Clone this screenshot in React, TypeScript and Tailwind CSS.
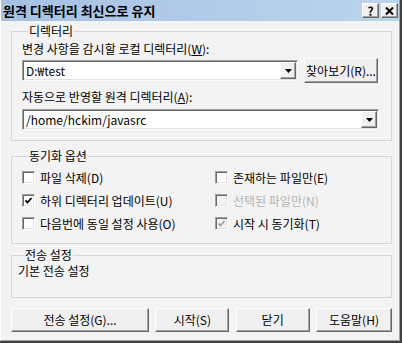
import type { ReactNode } from "react";

const font = "font-['Noto_Sans_CJK_KR','Noto_Sans',sans-serif]";

function Raised({ children, className = "" }: { children?: ReactNode; className?: string }) {
  return (
    <div
      className={`flex items-center justify-center border border-t-white border-l-white border-r-[#696969] border-b-[#696969] bg-[#f0f0f0] shadow-[inset_-1px_-1px_0_#a0a0a0] ${className}`}
    >
      {children}
    </div>
  );
}

function Combo({ value, className = "" }: { value: string; className?: string }) {
  return (
    <div
      className={`flex h-[21px] items-stretch border border-t-[#a0a0a0] border-l-[#a0a0a0] border-r-white border-b-white bg-white shadow-[inset_1px_1px_0_#696969,inset_-1px_-1px_0_#e3e3e3] p-[1px] ${className}`}
    >
      <div className="flex flex-1 items-center pl-[2px] text-[12px] leading-[14px] text-black">{value}</div>
      <Raised className="w-[16px]">
        <svg width="7" height="4" viewBox="0 0 7 4">
          <path d="M0 0h7L3.5 4z" fill="#000" />
        </svg>
      </Raised>
    </div>
  );
}

function CheckBox({
  label,
  checked = false,
  disabled = false,
  boxDisabled = false,
}: {
  label: string;
  checked?: boolean;
  disabled?: boolean;
  boxDisabled?: boolean;
}) {
  const gray = disabled || boxDisabled;
  return (
    <div className="flex h-[23px] items-center gap-[5px]">
      <div
        className={`flex h-[13px] w-[13px] items-center justify-center border border-t-[#a0a0a0] border-l-[#a0a0a0] border-r-white border-b-white shadow-[inset_1px_1px_0_#696969,inset_-1px_-1px_0_#e3e3e3] ${
          gray ? "bg-[#f3f3f3]" : "bg-white"
        }`}
      >
        {checked ? (
          <svg width="9" height="9" viewBox="0 0 9 9">
            <path d="M1.5 4.5L3.5 6.5L7.5 2" fill="none" stroke={gray ? "#a0a0a0" : "#000"} strokeWidth="1.8" />
          </svg>
        ) : null}
      </div>
      <span className={`text-[12px] leading-[14px] ${disabled ? "text-[#b4b4b4]" : "text-black"}`}>{label}</span>
    </div>
  );
}

function Group({ title, children, className = "" }: { title: string; children: ReactNode; className?: string }) {
  return (
    <fieldset className={`border border-[#d5d5d5] ${className}`}>
      <legend className="ml-[6px] px-[1px] text-[12px] leading-[14px] text-black">{title}</legend>
      {children}
    </fieldset>
  );
}

export default function App() {
  return (
    <div className={`h-[343px] w-[402px] overflow-hidden border-r-2 border-b-2 border-[#404040] ${font}`}>
      <div className="flex h-full flex-col border-l border-r border-b border-l-white border-r-[#a0a0a0] border-b-[#a0a0a0] bg-[#f3f3f3]">
        <div className="flex h-[21px] items-center justify-between bg-gradient-to-r from-[#a6c2e3] to-[#bcd3ec] pl-[2px] pr-[1px]">
          <span className="text-[13px] leading-[15px] font-bold text-black">원격 디렉터리 최신으로 유지</span>
          <div className="flex gap-[2px]">
            <Raised className="h-[15px] w-[17px] bg-[#ececec]">
              <span className="text-[12px] leading-[12px] font-bold text-black">?</span>
            </Raised>
            <Raised className="h-[15px] w-[17px] bg-[#ececec]">
              <svg width="9" height="8" viewBox="0 0 9 8">
                <path d="M1 0.5L8 7.5M8 0.5L1 7.5" stroke="#000" strokeWidth="2" />
              </svg>
            </Raised>
          </div>
        </div>

        <div className="flex flex-col pl-[10px] pr-[7px]">
          <Group title="디렉터리" className="mt-[3px] pl-[10px] pr-[12px] pb-[10px]">
            <div className="mt-[4px] text-[12px] leading-[14px] text-black">
              변경 사항을 감시할 로컬 디렉터리(<span className="underline">W</span>):
            </div>
            <div className="mt-[2px] flex h-[25px] items-center gap-[6px]">
              <Combo value="D:₩test" className="w-[276px]" />
              <Raised className="h-[25px] w-[74px]">
                <span className="text-[12px] leading-[14px] text-black">찾아보기(R)...</span>
              </Raised>
            </div>
            <div className="mt-[7px] text-[12px] leading-[14px] text-black">
              자동으로 반영할 원격 디렉터리(<span className="underline">A</span>):
            </div>
            <Combo value="/home/hckim/javasrc" className="mt-[5px] w-[357px]" />
          </Group>

          <Group title="동기화 옵션" className="mt-[8px] pl-[10px] pb-[8px]">
            <div className="mt-[3px] grid grid-cols-[193px_1fr]">
              <CheckBox label="파일 삭제(D)" />
              <CheckBox label="존재하는 파일만(E)" />
              <CheckBox label="하위 디렉터리 업데이트(U)" checked />
              <CheckBox label="선택된 파일만(N)" disabled />
              <CheckBox label="다음번에 동일 설정 사용(O)" />
              <CheckBox label="시작 시 동기화(T)" checked boxDisabled />
            </div>
          </Group>

          <Group title="전송 설정" className="mt-[4px] pl-[6px] pb-[19px]">
            <div className="mt-[2px] text-[12px] leading-[14px] text-black">기본 전송 설정</div>
          </Group>

          <div className="mt-[10px] flex justify-between">
            <Raised className="h-[24px] w-[138px]">
              <span className="text-[12px] leading-[14px] text-black">전송 설정(G)...</span>
            </Raised>
            <Raised className="h-[24px] w-[74px]">
              <span className="text-[12px] leading-[14px] text-black">시작(S)</span>
            </Raised>
            <Raised className="h-[24px] w-[74px]">
              <span className="text-[12px] leading-[14px] text-black">닫기</span>
            </Raised>
            <Raised className="h-[24px] w-[76px]">
              <span className="text-[12px] leading-[14px] text-black">도움말(H)</span>
            </Raised>
          </div>
        </div>
      </div>
    </div>
  );
}
